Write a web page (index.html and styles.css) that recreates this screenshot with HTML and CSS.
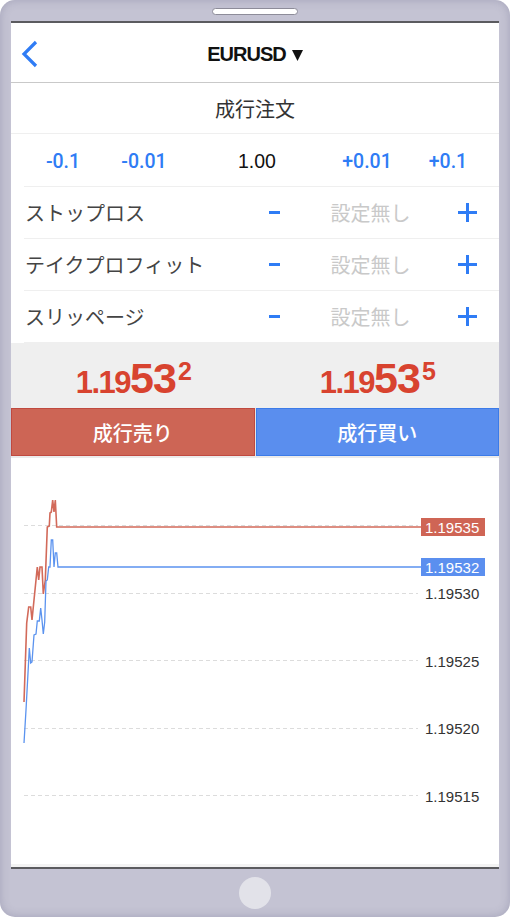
FILE: index.html
```html
<!DOCTYPE html>
<html>
	<head>
		<meta charset="utf-8">
		<meta name="viewport" content="width=device-width">
		<title>成行注文 EURUSD</title>
		<link rel="stylesheet" href="styles.css">
	</head>

	<body>
		<div class="phone">
			<div class="speaker"></div>

			<main class="screen">
				<header class="topbar">
					<a class="back" href="#">
						<svg width="18" height="28" viewBox="0 0 18 28"><polyline points="15,2 3,14 15,26" fill="none" stroke="#2f7cf5" stroke-width="3.2"/></svg>
					</a>
					<div class="title">EURUSD<svg class="caret" width="11" height="11" viewBox="0 0 11 11"><polygon points="0,0 11,0 5.5,11" fill="#111"/></svg></div>
					<span></span>
				</header>

				<div class="order-type">成行注文</div>

				<div class="lot">
					<span class="step">-0.1</span>
					<span class="step">-0.01</span>
					<span class="amount">1.00</span>
					<span class="step">+0.01</span>
					<span class="step">+0.1</span>
				</div>

				<div class="setting">
					<span class="label">ストップロス</span>
					<svg class="minus" width="11" height="3"><rect width="11" height="3" fill="#2f7cf5"/></svg>
					<span class="value">設定無し</span>
					<svg class="plus" width="19" height="19"><path d="M9.5 0v19M0 9.5h19" stroke="#2f7cf5" stroke-width="3"/></svg>
				</div>
				<div class="setting">
					<span class="label">テイクプロフィット</span>
					<svg class="minus" width="11" height="3"><rect width="11" height="3" fill="#2f7cf5"/></svg>
					<span class="value">設定無し</span>
					<svg class="plus" width="19" height="19"><path d="M9.5 0v19M0 9.5h19" stroke="#2f7cf5" stroke-width="3"/></svg>
				</div>
				<div class="setting">
					<span class="label">スリッページ</span>
					<svg class="minus" width="11" height="3"><rect width="11" height="3" fill="#2f7cf5"/></svg>
					<span class="value">設定無し</span>
					<svg class="plus" width="19" height="19"><path d="M9.5 0v19M0 9.5h19" stroke="#2f7cf5" stroke-width="3"/></svg>
				</div>

				<div class="quotes">
					<div class="quote">1.19<b>53</b><sup>2</sup></div>
					<div class="quote">1.19<b>53</b><sup>5</sup></div>
				</div>

				<div class="actions">
					<button class="sell">成行売り</button>
					<button class="buy">成行買い</button>
				</div>

				<div class="chart">
					<svg width="488" height="406" viewBox="0 0 488 406">
						<g stroke="#dcdcdc" stroke-dasharray="4 3">
							<line x1="13" y1="67.5" x2="407" y2="67.5"/>
							<line x1="13" y1="135.5" x2="407" y2="135.5"/>
							<line x1="13" y1="202.5" x2="407" y2="202.5"/>
							<line x1="13" y1="270.5" x2="407" y2="270.5"/>
							<line x1="13" y1="337.5" x2="407" y2="337.5"/>
						</g>
						<g class="axis">
							<text x="414" y="140.5">1.19530</text>
							<text x="414" y="208.5">1.19525</text>
							<text x="414" y="276">1.19520</text>
							<text x="414" y="343.5">1.19515</text>
						</g>
						<polyline fill="none" stroke="#d26a5a" stroke-width="1.6" points="13,244 15.7,165 17.7,149 19.7,149 21,162 23,142 25,122 26.3,109 27.7,122 29,109 31,109 32.3,136 34.3,122 36.3,69 38.3,68 39,55 40.3,54 41.7,42 43,54 44.3,42 45.7,69 410,69"/>
						<polyline fill="none" stroke="#5b93ef" stroke-width="1.3" points="13,285 15,252 17.7,202 18.3,190 19.7,205 21,204 23,177 25,176 26.3,163 28.3,163 29.7,150 31,162 32.3,176 33.7,164 35,123 36.3,122 37.7,109 39,109 40.3,82 41.7,82 43,109 44.3,95 45.7,95 47,109 410,109"/>
						<rect x="410" y="60" width="64" height="18" fill="#cf6555"/>
						<text class="tag" x="414" y="74.5">1.19535</text>
						<rect x="410" y="100" width="64" height="18" fill="#5b8fef"/>
						<text class="tag" x="414" y="114.5">1.19532</text>
					</svg>
				</div>
			</main>

			<div class="home"><span></span></div>
		</div>
	</body>

</html>
```

FILE: styles.css
```css
* {
	box-sizing: border-box;
}
body {
	margin: 0;
	background: #fff;
	font-family: "Liberation Sans", "Noto Sans CJK JP", sans-serif;
}
.phone {
	width: 510px;
	height: 917px;
	padding: 0 11px;
	border-radius: 15px;
	background: #c4c3d3;
	box-shadow: inset 0 0 10px rgba(70, 70, 110, 0.25);
	display: flex;
	flex-direction: column;
}
.speaker {
	align-self: center;
	width: 86px;
	height: 7px;
	margin: 8px 0 6px;
	border: 1px solid #8d8c99;
	border-radius: 4px;
	background: #fff;
}
.screen {
	height: 848px;
	background: #fff;
	border-top: 2px solid #5b5b5f;
	border-bottom: 2px solid #5b5b5f;
	display: flex;
	flex-direction: column;
}
.home {
	flex: 1;
	display: flex;
	align-items: center;
	justify-content: center;
}
.home span {
	width: 32px;
	height: 32px;
	border-radius: 50%;
	background: #e2e2e9;
}

/* header */
.topbar {
	height: 60px;
	border-bottom: 1px solid #c9c9c9;
	display: grid;
	grid-template-columns: 60px 1fr 60px;
	align-items: center;
}
.back {
	display: flex;
	padding: 3px 0 0 10px;
}
.title {
	text-align: center;
	font-size: 20px;
	font-weight: bold;
	letter-spacing: -1px;
	color: #111;
	padding-top: 3px;
}
.caret {
	margin-left: 6px;
}
.order-type {
	height: 51px;
	border-bottom: 1px solid #efefef;
	display: flex;
	align-items: center;
	justify-content: center;
	font-size: 20px;
	color: #333;
}

/* lots */
.lot {
	height: 53px;
	margin-left: 13px;
	padding-top: 3px;
	border-bottom: 1px solid #efefef;
	display: grid;
	grid-template-columns: 78px 84px 142px 78px 84px;
	align-items: center;
	text-align: center;
	font-size: 19.5px;
}
.step {
	color: #2f7cf5;
	font-family: Roboto, "Liberation Sans", sans-serif;
	font-weight: 500;
}
.amount {
	color: #111;
}

/* stop / limit / slippage */
.setting {
	height: 52px;
	margin-left: 13px;
	padding: 0 12px 0 1px;
	border-bottom: 1px solid #efefef;
	display: grid;
	grid-template-columns: 1fr 40px 153px 40px;
	align-items: center;
	justify-items: center;
}
.setting:last-of-type {
	border-bottom: none;
}
.setting .label {
	justify-self: start;
	font-size: 20px;
	color: #444;
}
.setting .value {
	font-size: 20px;
	color: #c9c9c9;
}

/* prices */
.quotes {
	height: 65px;
	background: #efefef;
	display: grid;
	grid-template-columns: 1fr 1fr;
}
.quote {
	text-align: center;
	color: #d8432f;
	font-weight: bold;
	font-size: 31px;
	letter-spacing: -1.5px;
	line-height: 1;
	padding-top: 14px;
}
.quote b {
	font-size: 43px;
	letter-spacing: -1px;
}
.quote sup {
	font-size: 25px;
	vertical-align: 13px;
	margin-left: 2px;
}
.actions {
	height: 48px;
	display: grid;
	grid-template-columns: 1fr 1fr;
	gap: 1px;
	background: #e6e6e6;
}
.actions button {
	font-family: "Noto Sans CJK JP", sans-serif;
	font-size: 20px;
	font-weight: 500;
	color: #fff;
}
.sell {
	background: #cd6555;
	border: 1px solid #c0493f;
}
.buy {
	background: #5a8eee;
	border: 1px solid #3c7be8;
}

/* chart */
.chart {
	flex: 1;
	border-top: 2px solid #ebebeb;
	border-bottom: 3px solid #f3f3f3;
}
.chart svg {
	display: block;
}
.chart text {
	font-family: "Liberation Sans", sans-serif;
	font-size: 15px;
}
.axis text {
	fill: #333;
}
.chart .tag {
	fill: #fff;
}
```
